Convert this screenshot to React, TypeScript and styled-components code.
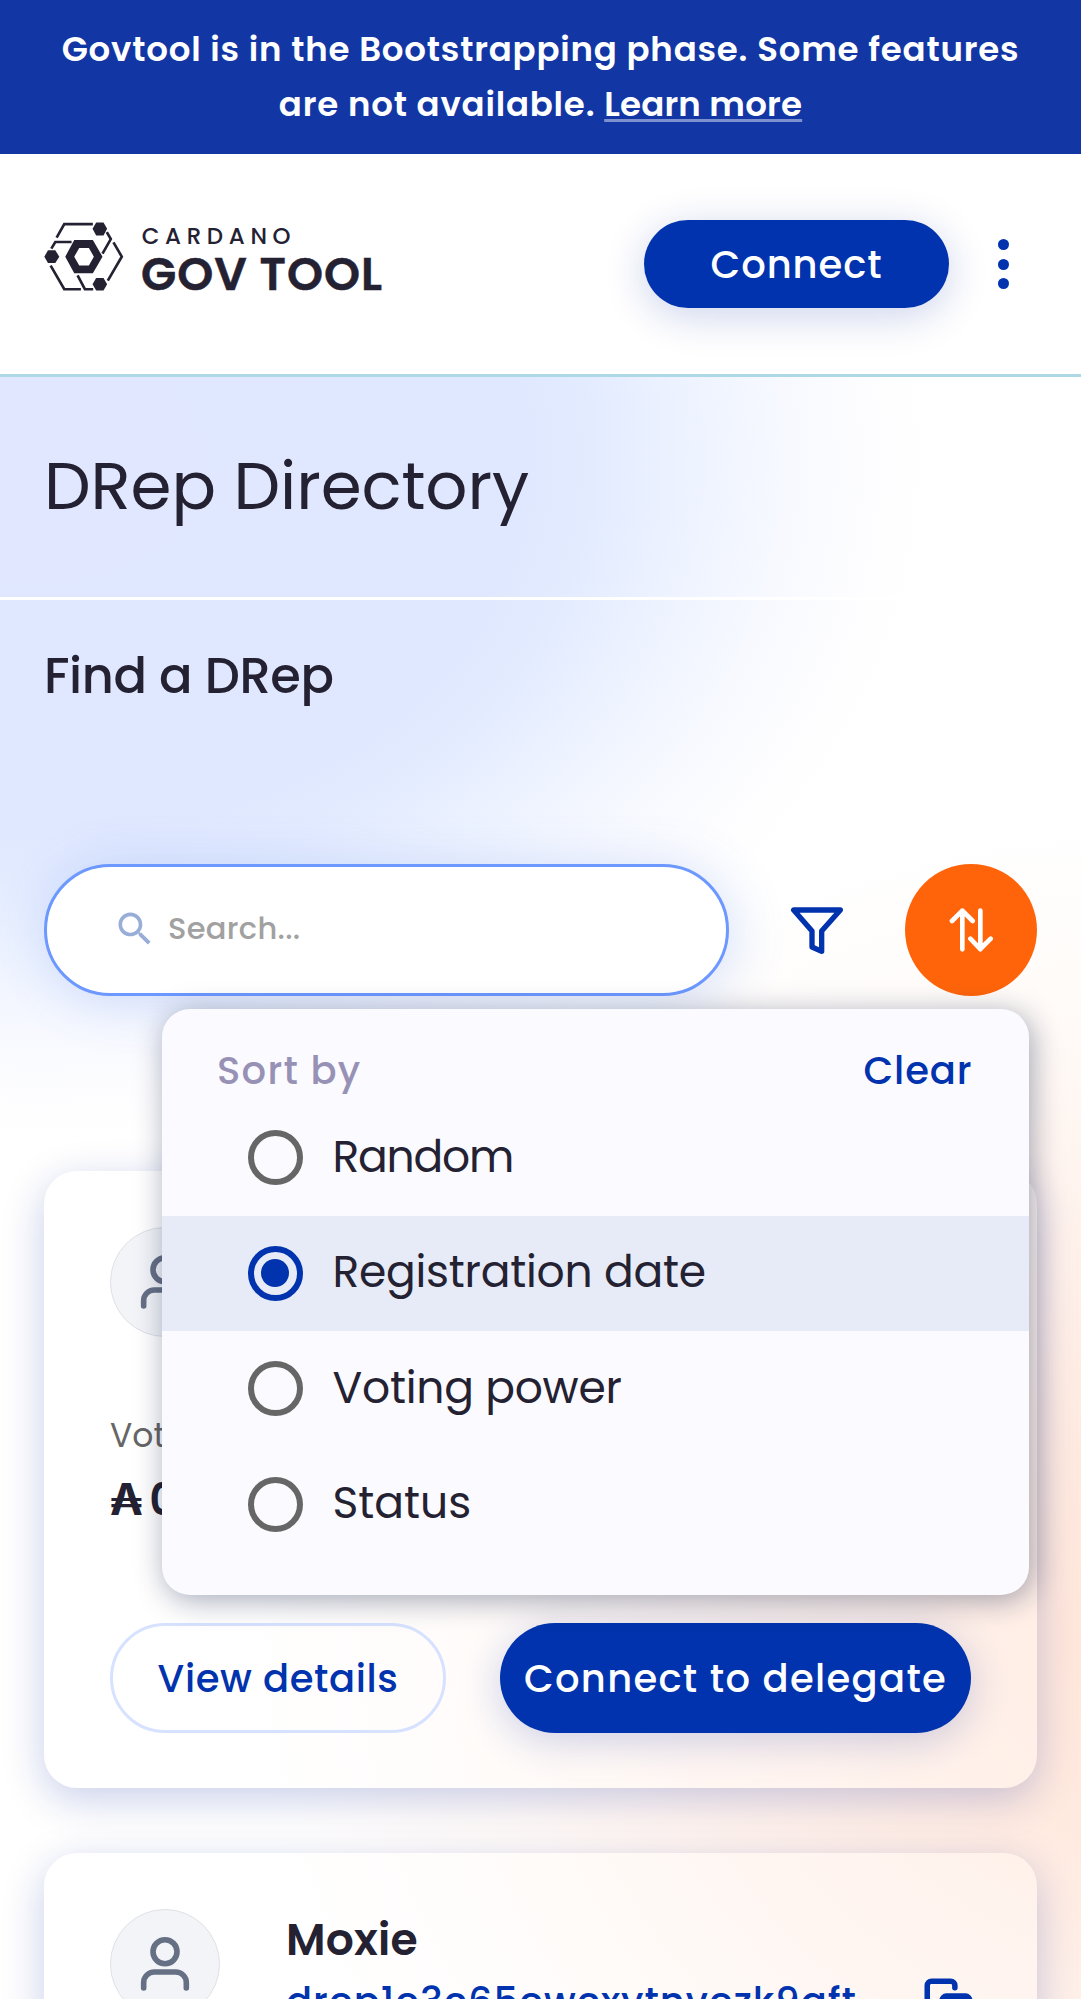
import React from "react";
import styled, { createGlobalStyle, css } from "styled-components";

const blue = "#0033ad";
const ink = "#242232";

const GlobalStyle = createGlobalStyle`
  *, *::before, *::after { box-sizing: border-box; }
  html, body { margin: 0; padding: 0; background: #fff; }
  body { overflow: hidden; }
  button, input { font: inherit; }
`;

const Page = styled.div`
  width: 1081px;
  height: 1999px;
  overflow: hidden;
  color: ${ink};
  font-family: Poppins, Inter, sans-serif;
  background:
    radial-gradient(ellipse 920px 820px at 1170px 1640px,
      rgba(255, 227, 212, 0.92) 0%, rgba(255, 229, 216, 0.8) 25%, rgba(255, 236, 227, 0.7) 50%, rgba(255, 246, 241, 0.55) 75%, rgba(255, 255, 255, 0) 100%),
    radial-gradient(ellipse 890px 680px at 40px 460px,
      #e0e7ff 0%, #e0e8ff 54%, #e3ebff 62%, #ecf2ff 72%, #f7f9ff 84%, #fdfdff 93%, rgba(255, 255, 255, 0) 100%),
    #fff;
`;

const Banner = styled.div`
  height: 154px;
  padding-top: 22px;
  background: #1237a5;
  color: #fff;
  text-align: center;
  font-size: 34px;
  font-weight: 600;
  line-height: 55px;
  letter-spacing: 0.8px;
`;

const BannerLink = styled.a`
  color: #fff;
  letter-spacing: 0.2px;
  text-decoration: underline;
  text-decoration-color: rgba(255, 255, 255, 0.45);
  text-decoration-thickness: 3px;
  text-underline-offset: 3px;
  text-decoration-skip-ink: none;
`;

const Header = styled.header`
  display: flex;
  align-items: center;
  height: 223px;
  padding: 0 45px 0 43.5px;
  background: #fff;
  border-bottom: 3px solid #add8e6;
`;

const Logo = styled.svg`
  display: block;
  width: 339px;
  height: 71.3px;
  margin: 0 auto 14px 0;
  flex: none;
  overflow: visible;
`;

const pill = css`
  display: flex;
  align-items: center;
  justify-content: center;
  border-radius: 100px;
  font-size: 38.5px;
  font-weight: 500;
  padding: 0;
  white-space: nowrap;
`;

const PrimaryButton = styled.button<{ $w: number; $h: number; $spacing: number }>`
  ${pill}
  width: ${(p) => p.$w}px;
  height: ${(p) => p.$h}px;
  letter-spacing: ${(p) => p.$spacing}px;
  border: 0;
  background: ${blue};
  color: #fff;
  box-shadow: 0 8px 41px rgba(0, 38, 160, 0.2);
`;

const OutlineButton = styled.button`
  ${pill}
  width: 336px;
  height: 110px;
  letter-spacing: 0.6px;
  border: 3px solid #d6e2ff;
  background: transparent;
  color: ${blue};
`;

const MenuButton = styled.button`
  width: 66px;
  height: 66px;
  margin-left: 21px;
  padding: 0;
  border: 0;
  background: none;
  display: flex;
  flex-direction: column;
  align-items: center;
  justify-content: center;
  gap: 8.4px;
`;

const Dot = styled.span`
  width: 11px;
  height: 11px;
  border-radius: 50%;
  background: ${blue};
`;

const TitleBar = styled.div`
  height: 223px;
  padding: 60px 44px 0;
  border-bottom: 3px solid #fff;
`;

const Title = styled.h1`
  margin: 0;
  font-size: 66px;
  font-weight: 400;
  line-height: 99px;
  letter-spacing: -0.1px;
`;

const Main = styled.main`
  padding: 43px 44px 0;
`;

const Subtitle = styled.h2`
  margin: 0 0 155px;
  font-size: 49.5px;
  font-weight: 500;
  line-height: 66px;
  letter-spacing: -0.4px;
`;

const Toolbar = styled.div`
  position: relative;
  display: flex;
  align-items: center;
  justify-content: space-between;
  height: 132px;
  margin-bottom: 175px;
`;

const SearchField = styled.label`
  display: flex;
  align-items: center;
  gap: 11px;
  width: 685px;
  height: 132px;
  padding: 0 0 3px 66px;
  border: 3px solid #6c98ff;
  border-radius: 68px;
  background: #fff;
  box-shadow: 5px 5px 55px rgba(47, 98, 220, 0.2);
`;

const SearchInput = styled.input`
  width: 400px;
  padding: 0;
  border: 0;
  outline: 0;
  background: none;
  font-size: 30.5px;
  font-weight: 500;
  letter-spacing: 0.3px;
  &::placeholder { color: #a1a1a1; opacity: 1; }
`;

const FilterButton = styled.button`
  width: 132px;
  height: 132px;
  padding: 0;
  border: 0;
  background: none;
  display: grid;
  place-items: center;
`;

const SortButton = styled(FilterButton)`
  border-radius: 50%;
  background: #ff640a;
`;

const SortPanel = styled.div`
  position: absolute;
  top: 145px;
  left: 118px;
  z-index: 2;
  width: 866.5px;
  height: 586px;
  padding-top: 30px;
  border-radius: 28px;
  background: #fbfaff;
  box-shadow: 3px 5px 30px rgba(0, 18, 61, 0.37);
  overflow: hidden;
`;

const PanelHead = styled.div`
  display: flex;
  justify-content: space-between;
  height: 61px;
  padding: 0 56px 0 55px;
  font-size: 38.5px;
  font-weight: 500;
  line-height: 63px;
  letter-spacing: 1.3px;
  color: #9792b5;
`;

const ClearLink = styled.span`
  color: ${blue};
  letter-spacing: 0.9px;
`;

const Option = styled.div<{ $selected?: boolean }>`
  display: flex;
  align-items: center;
  gap: 30px;
  height: 115.5px;
  padding-left: 85.5px;
  background: ${(p) => (p.$selected ? "#e6ebf7" : "transparent")};
  font-size: 44px;
  line-height: 66px;
`;

const Radio = styled.span<{ $selected?: boolean }>`
  display: grid;
  place-items: center;
  width: 55px;
  height: 55px;
  border-radius: 50%;
  border: 6px solid ${(p) => (p.$selected ? blue : "#666")};
  &::after {
    content: "";
    width: 28px;
    height: 28px;
    border-radius: 50%;
    background: ${(p) => (p.$selected ? blue : "transparent")};
  }
`;

const OptionLabel = styled.span<{ $spacing?: number }>`
  padding-bottom: 2px;
  letter-spacing: ${(p) => p.$spacing ?? 0}px;
`;

const Card = styled.article`
  height: 617px;
  margin-bottom: 65px;
  padding: 56px 66px 0;
  border-radius: 33px;
  background: rgba(255, 255, 255, 0.3);
  box-shadow: 0 11px 41px rgba(0, 38, 160, 0.22);
`;

const CardTop = styled.div`
  display: flex;
`;

const Avatar = styled.div`
  display: grid;
  place-items: center;
  flex: none;
  width: 110px;
  height: 110px;
  border: 1.5px solid #dfe1e6;
  border-radius: 50%;
  background: #f2f4f8;
`;

const Identity = styled.div`
  margin-left: 66px;
  padding-top: 1px;
`;

const Name = styled.div`
  font-size: 44px;
  font-weight: 600;
  line-height: 60px;
  letter-spacing: 0.2px;
`;

const DrepId = styled.div`
  margin-top: 4px;
  width: 573px;
  color: ${blue};
  font-size: 38.5px;
  font-weight: 500;
  line-height: 55px;
  letter-spacing: 1px;
  white-space: nowrap;
`;

const CopyIcon = styled.svg`
  margin: 68px -3px 0 auto;
  width: 51px;
  height: 51px;
`;

const PowerLabel = styled.div`
  margin-top: 71px;
  color: #666;
  font-size: 33px;
  line-height: 55px;
`;

const PowerValue = styled.div`
  display: flex;
  gap: 8px;
  margin-top: 4px;
  margin-bottom: 90px;
  font-size: 44px;
  font-weight: 600;
  line-height: 66px;
  letter-spacing: -0.5px;
`;

const AdaSign = styled.span`
  font-weight: 700;
  letter-spacing: -1.5px;
`;

const Actions = styled.div`
  display: flex;
  justify-content: space-between;
`;

const CardanoLogo = () => (
  <Logo viewBox="40 34 1020 214" fill="none">
    <g stroke={ink} strokeWidth="8">
      <path d="M78 84 L101 43 H187" />
      <path d="M229 67 L241 88 L216 132" />
      <path d="M249 98 L274 141 L232 213" />
      <path d="M141 197 L163 239 H188" />
      <path d="M60 168 L101 239 H151" />
      <path d="M62 117 L74 97 H123" />
    </g>
    <g fill={ink}>
      <path d="M186 57 L197 38 H219 L230 57 L219 77 H197 Z" />
      <path d="M186 224 L197 205 H219 L230 224 L219 243 H197 Z" />
      <path d="M41 141 L52 122 H74 L86 141 L74 160 H52 Z" />
      <path fillRule="evenodd" d="M104 141 L131 91 H187 L216 141 L187 191 H131 Z M131 141 L146 168 H175 L190 141 L175 115 H146 Z" />
      <text x="334" y="104" fontSize="69" fontWeight="500" textLength="448" lengthAdjust="spacing">CARDANO</text>
      <text x="332" y="241" fontSize="138" fontWeight="600" stroke={ink} strokeWidth="1.5" textLength="725" lengthAdjust="spacing">GOV TOOL</text>
    </g>
  </Logo>
);

const PersonIcon = () => (
  <svg width="64" height="64" viewBox="0 0 24 24" fill="none" stroke="#667085" strokeWidth="2.1" strokeLinecap="round">
    <circle cx="12" cy="7.4" r="4.5" />
    <path d="M4 21v-2a4 4 0 0 1 4-4h8a4 4 0 0 1 4 4v2" />
  </svg>
);

const options = [
  { label: "Random", spacing: -1.2 },
  { label: "Registration date", spacing: -0.25, selected: true },
  { label: "Voting power", spacing: -0.25 },
  { label: "Status", spacing: 0 },
];

export default function App() {
  return (
    <Page>
      <GlobalStyle />
      <Banner>
        Govtool is in the Bootstrapping phase. Some features
        <br />
        are not available. <BannerLink>Learn more</BannerLink>
      </Banner>
      <Header>
        <CardanoLogo />
        <PrimaryButton $w={305} $h={88} $spacing={0.9}>Connect</PrimaryButton>
        <MenuButton aria-label="Menu">
          <Dot />
          <Dot />
          <Dot />
        </MenuButton>
      </Header>
      <TitleBar>
        <Title>DRep Directory</Title>
      </TitleBar>
      <Main>
        <Subtitle>Find a DRep</Subtitle>
        <Toolbar>
          <SearchField>
            <svg width="44" height="44" viewBox="0 0 24 24" fill="#99add9">
              <path d="M15.5 14h-.79l-.28-.27C15.41 12.59 16 11.11 16 9.5 16 5.91 13.09 3 9.5 3S3 5.91 3 9.5 5.91 16 9.5 16c1.61 0 3.09-.59 4.23-1.57l.27.28v.79l5 4.99L20.49 19l-4.99-5zm-6 0C7.01 14 5 11.99 5 9.5S7.01 5 9.5 5 14 7.01 14 9.5 11.99 14 9.5 14z" />
            </svg>
            <SearchInput placeholder="Search..." />
          </SearchField>
          <FilterButton aria-label="Filter">
            <svg width="54" height="49" viewBox="210 195 162 147" fill="none" stroke={blue} strokeWidth="16" strokeLinejoin="round">
              <path d="M221 207 H361 L305 270 V331 L276 318 V270 Z" />
            </svg>
          </FilterButton>
          <SortButton aria-label="Sort">
            <svg width="44.7" height="45.7" viewBox="685 200 134 137" fill="none" stroke="#fff" strokeWidth="14" strokeLinecap="round" strokeLinejoin="round">
              <path d="M725 327 V211 M694 242 L725 211 L756 242 M779 211 V327 M749 295 L779 326 L810 295" />
            </svg>
          </SortButton>
          <SortPanel>
            <PanelHead>
              Sort by
              <ClearLink>Clear</ClearLink>
            </PanelHead>
            {options.map((o) => (
              <Option key={o.label} $selected={o.selected}>
                <Radio $selected={o.selected} />
                <OptionLabel $spacing={o.spacing}>{o.label}</OptionLabel>
              </Option>
            ))}
          </SortPanel>
        </Toolbar>
        <Card>
          <CardTop>
            <Avatar>
              <PersonIcon />
            </Avatar>
          </CardTop>
          <PowerLabel>Voting power</PowerLabel>
          <PowerValue>
            <AdaSign>₳</AdaSign>
            <span>0</span>
          </PowerValue>
          <Actions>
            <OutlineButton>View details</OutlineButton>
            <PrimaryButton $w={471} $h={110} $spacing={1.3}>Connect to delegate</PrimaryButton>
          </Actions>
        </Card>
        <Card>
          <CardTop>
            <Avatar>
              <PersonIcon />
            </Avatar>
            <Identity>
              <Name>Moxie</Name>
              <DrepId>drep1e3c65ewcxytnvezk9gft</DrepId>
            </Identity>
            <CopyIcon viewBox="0 0 24 24" fill="none" stroke={blue} strokeWidth="2.6" strokeLinecap="round" strokeLinejoin="round">
              <rect x="9" y="9" width="13" height="13" rx="2" />
              <path d="M5 15H4a2 2 0 0 1-2-2V4a2 2 0 0 1 2-2h9a2 2 0 0 1 2 2v1" />
            </CopyIcon>
          </CardTop>
        </Card>
      </Main>
    </Page>
  );
}
